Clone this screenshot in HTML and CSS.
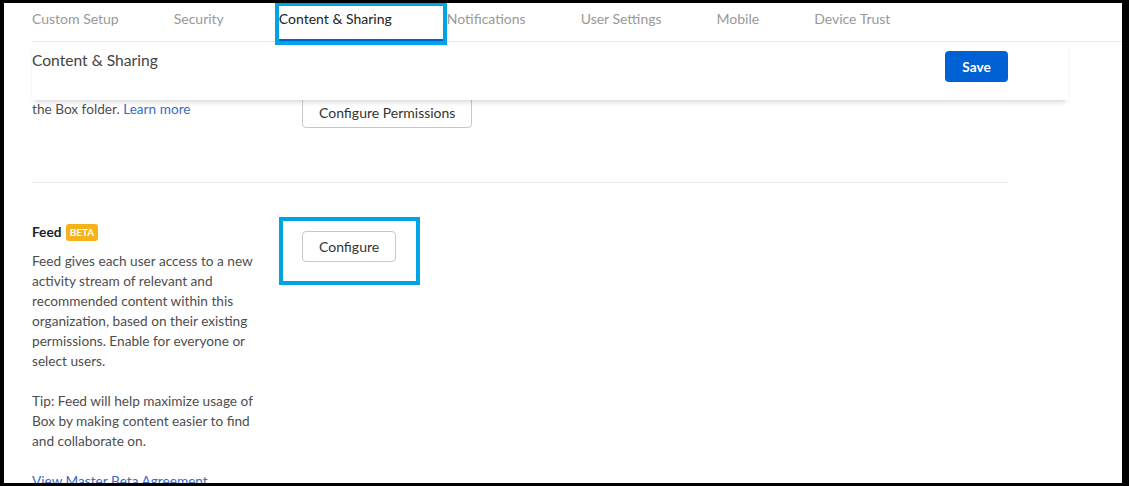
FILE: index.html
```html
<!DOCTYPE html>
<html lang="en">
<head>
    <meta charset="UTF-8">
    <meta name="viewport" content="width=device-width, initial-scale=1.0">
    <title>Content & Sharing</title>
    <link rel="stylesheet" href="styles.css">
</head>
<body>
    <div class="frame">
        <nav class="tabs">
            <a class="tab">Custom Setup</a>
            <a class="tab">Security</a>
            <a class="tab active">Content &amp; Sharing</a>
            <a class="tab">Notifications</a>
            <a class="tab">User Settings</a>
            <a class="tab">Mobile</a>
            <a class="tab">Device Trust</a>
        </nav>

        <div class="content">
            <div class="sticky-header">
                <h1 class="page-title">Content &amp; Sharing</h1>
                <button class="btn-primary">Save</button>
            </div>

            <section class="setting">
                <div class="setting-info">
                    <p>the Box folder. <a class="link" href="#">Learn more</a></p>
                </div>
                <div class="setting-action">
                    <button class="btn">Configure Permissions</button>
                </div>
            </section>

            <section class="setting feed">
                <div class="setting-info">
                    <h3 class="setting-title">Feed <span class="badge">BETA</span></h3>
                    <p>Feed gives each user access to a new activity stream of relevant and recommended content within this organization, based on their existing permissions. Enable for everyone or select users.</p>
                    <p>Tip: Feed will help maximize usage of Box by making content easier to find and collaborate on.</p>
                    <p><a class="link" href="#">View Master Beta Agreement</a></p>
                </div>
                <div class="setting-action">
                    <button class="btn">Configure</button>
                </div>
            </section>
        </div>

        <!-- annotation highlights -->
        <div class="highlight highlight-tab"></div>
        <div class="highlight highlight-configure"></div>
    </div>
</body>
</html>
```

FILE: styles.css
```css
:root {
    --text-color: #4e4e4e;
    --muted-color: #999999;
    --border-color: #e8e8e8;
    --link-color: #3a6cc0;
    --primary-color: #0061d5;
    --highlight-color: #00a4e4;
}
html, body {
    margin: 0;
    padding: 0;
    height: 100%;
}
body {
    background: #000;
    font-family: Lato, "Open Sans", sans-serif;
    color: var(--text-color);
    overflow: hidden;
}
.frame {
    position: relative;
    margin: 3px 7px 0 4px;
    height: 480px;
    background: #fff;
    overflow: hidden;
}
.tabs {
    display: flex;
    gap: 55px;
    margin-left: 28px;
    height: 38px;
    border-bottom: 1px solid var(--border-color);
}
.tab {
    font-size: 14px;
    line-height: 32px;
    color: var(--muted-color);
    white-space: nowrap;
}
.tab.active {
    color: #222;
}
.content {
    position: relative;
    padding: 57px 0 0 28px;
    width: 976px;
}
.sticky-header {
    position: absolute;
    top: 0;
    left: 28px;
    width: 1036px;
    height: 58px;
    box-sizing: border-box;
    padding: 8px 60px 0 0;
    display: flex;
    justify-content: space-between;
    align-items: flex-start;
    background: #fff;
    box-shadow: 0 4px 5px -2px rgba(0, 0, 0, 0.16);
    z-index: 2;
}
.page-title {
    margin: 0;
    font-size: 15.6px;
    font-weight: 400;
    line-height: 20px;
    color: #444;
}
.btn-primary {
    width: 63px;
    height: 31px;
    margin-top: 1px;
    border: none;
    border-radius: 4px;
    background: var(--primary-color);
    color: #fff;
    font-family: inherit;
    font-size: 13.6px;
    font-weight: 700;
}
.setting {
    display: flex;
    padding-bottom: 54px;
    border-bottom: 1px solid var(--border-color);
}
.setting-info {
    width: 270px;
    font-size: 13.65px;
    line-height: 20px;
}
.setting-info p {
    margin: 0;
    width: 230px;
}
.setting-info p + p {
    margin-top: 20px;
}
.setting-action {
    margin-top: -2px;
}
.link {
    color: var(--link-color);
    text-decoration: none;
}
.btn {
    height: 31px;
    padding: 0 16px;
    border: 1px solid #c8c8c8;
    border-radius: 4px;
    background: #fff;
    color: #333;
    font-family: inherit;
    font-size: 14px;
}
.feed {
    border-bottom: none;
    padding-top: 39px;
}
.feed .setting-action {
    margin-top: 0;
    padding-top: 9px;
}
.setting-title {
    margin: 0 0 9px;
    font-size: 13.65px;
    font-weight: 700;
    line-height: 20px;
    color: #222;
}
.badge {
    display: inline-block;
    margin-left: 1px;
    padding: 0 4px;
    border-radius: 3px;
    background: #f5b31b;
    color: #fff;
    font-size: 10px;
    font-weight: 700;
    line-height: 17px;
    vertical-align: 1px;
}
.highlight {
    position: absolute;
    border: 4px solid var(--highlight-color);
    box-sizing: border-box;
    pointer-events: none;
    z-index: 3;
}
.highlight-tab {
    left: 271px;
    top: -1px;
    width: 172px;
    height: 43px;
    box-shadow: inset 0 -2px 0 var(--primary-color);
}
.highlight-configure {
    left: 275px;
    top: 214px;
    width: 141px;
    height: 68px;
}
```
